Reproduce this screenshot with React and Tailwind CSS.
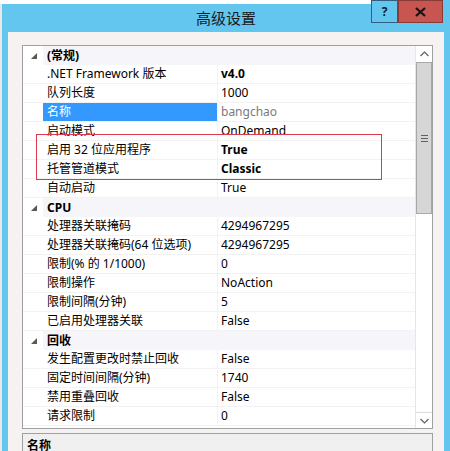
import React from "react";

const ROWS = [
  { cat: true, label: "(常规)" },
  { label: ".NET Framework 版本", value: "v4.0", bold: true },
  { label: "队列长度", value: "1000" },
  { label: "名称", value: "bangchao", selected: true, grey: true },
  { label: "启动模式", value: "OnDemand" },
  { label: "启用 32 位应用程序", value: "True", bold: true },
  { label: "托管管道模式", value: "Classic", bold: true },
  { label: "自动启动", value: "True" },
  { cat: true, label: "CPU" },
  { label: "处理器关联掩码", value: "4294967295" },
  { label: "处理器关联掩码(64 位选项)", value: "4294967295" },
  { label: "限制(% 的 1/1000)", value: "0" },
  { label: "限制操作", value: "NoAction" },
  { label: "限制间隔(分钟)", value: "5" },
  { label: "已启用处理器关联", value: "False" },
  { cat: true, label: "回收" },
  { label: "发生配置更改时禁止回收", value: "False" },
  { label: "固定时间间隔(分钟)", value: "1740" },
  { label: "禁用重叠回收", value: "False" },
  { label: "请求限制", value: "0" },
];

function Row({ row }) {
  if (row.cat) {
    return (
      <div className="flex h-[19px] items-center bg-white">
        <div className="flex w-[20px] items-center justify-center pl-[2px]">
          <svg width="6" height="6" viewBox="0 0 6 6">
            <path d="M6 0 L6 6 L0 6 Z" fill="#595959" />
          </svg>
        </div>
        <div className="flex h-full flex-1 items-center bg-[#f5f5fa] pl-[4px] font-bold">{row.label}</div>
      </div>
    );
  }
  return (
    <div className="flex h-[19px] items-stretch border-b border-[#f2f2f2] bg-white">
      <div className="w-[20px]" />
      <div
        className={
          "flex w-[174px] items-center pl-[4px] " +
          (row.selected ? "bg-[#3399ff] text-white" : "")
        }
      >
        {row.label}
      </div>
      <div className="w-px bg-[#f2f2f2]" />
      <div
        className={
          "flex flex-1 items-center pl-[3px] " +
          (row.bold ? "font-bold " : "") +
          (row.grey ? "text-[#7a7a7a]" : "")
        }
      >
        {row.value}
      </div>
    </div>
  );
}

function Scrollbar() {
  return (
    <div className="flex w-[17px] flex-col border-l border-[#e6e6e6] bg-white">
      <div className="flex h-[16px] items-center justify-center">
        <svg width="9" height="6" viewBox="0 0 9 6">
          <path d="M0.5 5 L4.5 1 L8.5 5" stroke="#606060" strokeWidth="1.2" fill="none" />
        </svg>
      </div>
      <div className="flex h-[152px] items-center justify-center border border-[#a8a8a8] bg-[#d6d6d6]">
        <div className="flex w-[7px] flex-col gap-[2px]">
          <div className="h-px bg-[#606060]" />
          <div className="h-px bg-[#606060]" />
          <div className="h-px bg-[#606060]" />
        </div>
      </div>
      <div className="flex-1" />
      <div className="flex h-[16px] items-center justify-center border-t border-[#dcdcdc]">
        <svg width="9" height="6" viewBox="0 0 9 6">
          <path d="M0.5 1 L4.5 5 L8.5 1" stroke="#606060" strokeWidth="1.2" fill="none" />
        </svg>
      </div>
    </div>
  );
}

export default function App() {
  return (
    <div
      className="relative h-[451px] w-[450px] overflow-hidden bg-white text-[12px] text-black"
      style={{ fontFamily: '"Noto Sans", "Noto Sans CJK SC", sans-serif' }}
    >
      <div className="ml-[2px] flex h-full flex-col bg-[#62c6ee] pl-[6px]">
        {/* title bar */}
        <div className="relative flex h-[32px] shrink-0 items-center justify-center pr-[6px]">
          <span className="mt-[4px] text-[15px] text-[#1a1a1a]">高级设置</span>
        </div>

        {/* client area */}
        <div className="mr-[6px] flex flex-1 flex-col bg-[#f6f2f2] pl-[14px] pr-[11px] pt-[13px]">
          <div className="flex h-[384px] shrink-0 border border-[#a0a0a0] bg-white">
            <div className="flex flex-1 flex-col">
              {ROWS.map((r, i) => (
                <Row key={i} row={r} />
              ))}
            </div>
            <Scrollbar />
          </div>
          <div className="mt-[4px] flex-1 border border-[#a0a0a0] bg-[#f0f0f0] px-[4px] pt-[4px]">
            <div className="font-bold leading-[16px]">名称</div>
          </div>
        </div>
      </div>

      {/* background artifact strip */}
      <div className="absolute left-0 top-0 h-[4px] w-[371px] bg-white" />
      <div className="absolute left-0 top-[4px] h-[447px] w-[2px] bg-[#e8e8e8]" />

      {/* caption buttons */}
      <div className="absolute left-[371px] top-0 flex h-[23px] w-[27px] items-center justify-center border border-[#2f5f7d] bg-[#62c6ee] text-[12px] font-bold text-[#102030]">
        ?
      </div>
      <div className="absolute left-[398px] top-0 flex h-[23px] w-[45px] items-center justify-center border border-[#8a3a36] bg-[#c75550]">
        <svg width="11" height="10" viewBox="0 0 11 10">
          <path d="M1 1 L10 9 M10 1 L1 9" stroke="#141414" strokeWidth="2.2" />
        </svg>
      </div>

      {/* red highlight box */}
      <div className="absolute left-[36px] top-[134px] h-[46px] w-[346px] border border-[#dc3a4c]" />
    </div>
  );
}
